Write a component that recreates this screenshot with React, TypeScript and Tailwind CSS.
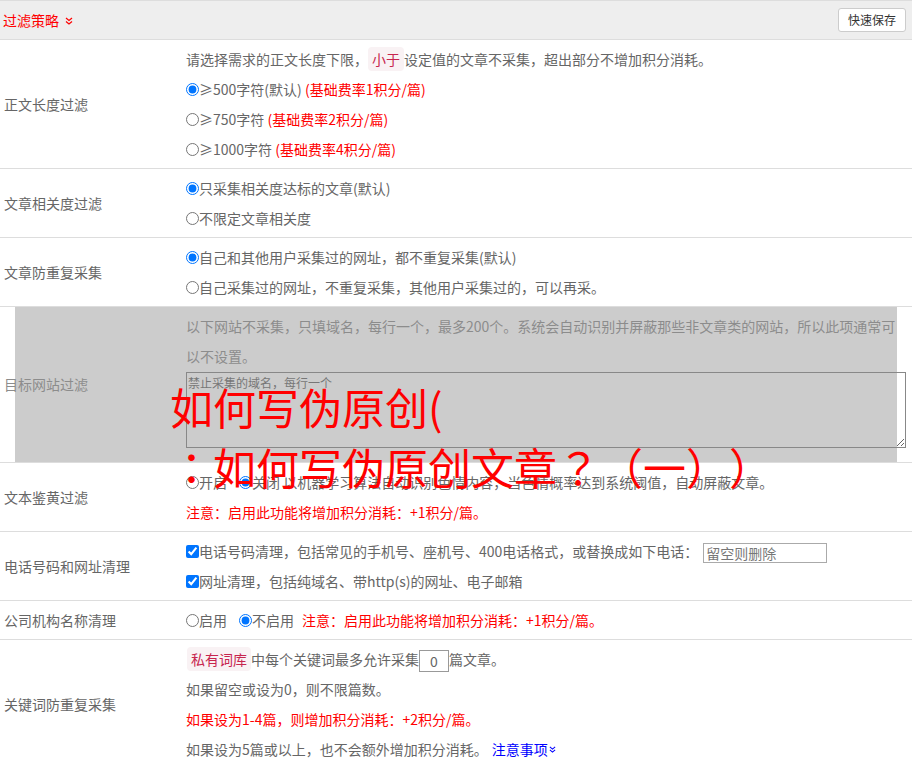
import type { ReactNode } from "react";

const font = { fontFamily: '"Noto Sans CJK SC", "Noto Sans", sans-serif' };
const tcFont = { fontFamily: '"Noto Sans CJK TC", sans-serif' };

function DoubleDown({ className }: { className?: string }) {
  return (
    <svg viewBox="0 0 8 8" className={className} fill="none" stroke="currentColor" strokeWidth="1.2">
      <path d="M1 1l3 2.5L7 1" />
      <path d="M1 4.5l3 2.5 3-2.5" />
    </svg>
  );
}

function Row({ label, children }: { label: string; children: ReactNode }) {
  return (
    <div className="flex border-b border-[#dddddd]">
      <div className="flex w-[186px] shrink-0 items-center pl-[4px]">{label}</div>
      <div className="flex-1 py-[4px] leading-[30px]">{children}</div>
    </div>
  );
}

function Radio({ name, checked }: { name: string; checked?: boolean }) {
  return (
    <input
      type="radio"
      name={name}
      defaultChecked={checked}
      className="m-0 h-[13px] w-[13px] align-[-1px]"
    />
  );
}

function Check() {
  return (
    <input type="checkbox" defaultChecked className="m-0 h-[13px] w-[13px] align-[-1px]" />
  );
}

function Tag({ children }: { children: ReactNode }) {
  return (
    <span className="rounded-[4px] bg-[#f9f2f4] px-[4px] py-[2px] text-[#c7254e]">{children}</span>
  );
}

export default function App() {
  return (
    <div
      className="relative w-[912px] bg-white text-[14px] text-[#666666] [text-spacing-trim:space-all]"
      style={font}
    >
      <div className="flex h-[40px] items-center justify-between border-y border-[#dddddd] bg-[#eeeeee] pl-[3px] pr-[6px]">
        <div className="flex items-center text-[#ff0000]">
          过滤策略
          <DoubleDown className="ml-[6px] mt-[1px] h-[8px] w-[8px]" />
        </div>
        <button className="h-[24px] rounded-[3px] border border-[#cccccc] bg-white px-[9px] text-[12px] text-[#333333]">
          快速保存
        </button>
      </div>

      <Row label="正文长度过滤">
        <div>
          请选择需求的正文长度下限，<Tag>小于</Tag>设定值的文章不采集，超出部分不增加积分消耗。
        </div>
        <div>
          <Radio name="len" checked />≥500字符(默认) <span className="text-[#ff0000]">(基础费率1积分/篇)</span>
        </div>
        <div>
          <Radio name="len" />≥750字符 <span className="text-[#ff0000]">(基础费率2积分/篇)</span>
        </div>
        <div>
          <Radio name="len" />≥1000字符 <span className="text-[#ff0000]">(基础费率4积分/篇)</span>
        </div>
      </Row>

      <Row label="文章相关度过滤">
        <div>
          <Radio name="rel" checked />只采集相关度达标的文章(默认)
        </div>
        <div>
          <Radio name="rel" />不限定文章相关度
        </div>
      </Row>

      <Row label="文章防重复采集">
        <div>
          <Radio name="dup" checked />自己和其他用户采集过的网址，都不重复采集(默认)
        </div>
        <div>
          <Radio name="dup" />自己采集过的网址，不重复采集，其他用户采集过的，可以再采。
        </div>
      </Row>

      <div className="relative flex border-b border-[#dddddd] text-[#8c8c8c]">
        <div className="absolute bottom-0 left-[15px] right-[15px] top-0 bg-[#cccccc]" />
        <div className="relative flex w-[186px] shrink-0 items-center pl-[4px]">目标网站过滤</div>
        <div className="relative flex-1 pb-[14px] pr-[6px] pt-[4px] leading-[30px]">
          <div className="whitespace-nowrap">
            以下网站不采集，只填域名，每行一个，最多200个。系统会自动识别并屏蔽那些非文章类的网站，所以此项通常可
          </div>
          <div>以不设置。</div>
          <textarea
            placeholder="禁止采集的域名，每行一个"
            className="mt-[1px] block h-[76px] w-full border border-[#888888] bg-transparent px-[1px] py-[1px] text-[12px] leading-[18px] placeholder:text-[#777777]"
          />
        </div>
      </div>

      <Row label="文本鉴黄过滤">
        <div>
          <Radio name="porn" />开启<span className="inline-block w-[12px]" />
          <Radio name="porn" checked />关闭 以机器学习算法自动识别色情内容，当色情概率达到系统阈值，自动屏蔽文章。
        </div>
        <div className="text-[#ff0000]">注意：启用此功能将增加积分消耗：+1积分/篇。</div>
      </Row>

      <Row label="电话号码和网址清理">
        <div>
          <Check />电话号码清理，包括常见的手机号、座机号、400电话格式，或替换成如下电话：
          <input
            placeholder="留空则删除"
            className="ml-[5px] h-[20px] w-[124px] border border-[#aaaaaa] px-[2px] align-middle text-[14px] placeholder:text-[#777777]"
          />
        </div>
        <div>
          <Check />网址清理，包括纯域名、带http(s)的网址、电子邮箱
        </div>
      </Row>

      <Row label="公司机构名称清理">
        <div>
          <Radio name="org" />启用<span className="inline-block w-[12px]" />
          <Radio name="org" checked />不启用
          <span className="ml-[8px] text-[#ff0000]">注意：启用此功能将增加积分消耗：+1积分/篇。</span>
        </div>
      </Row>

      <Row label="关键词防重复采集">
        <div>
          <span className="ml-[1px]" />
          <Tag>私有词库</Tag>中每个关键词最多允许采集
          <input
            defaultValue="0"
            className="h-[22px] w-[30px] border border-[#999999] text-center align-middle text-[14px] text-[#666666]"
          />
          篇文章。
        </div>
        <div>如果留空或设为0，则不限篇数。</div>
        <div className="text-[#ff0000]">如果设为1-4篇，则增加积分消耗：+2积分/篇。</div>
        <div>
          如果设为5篇或以上，也不会额外增加积分消耗。
          <span className="ml-[4px] inline-flex items-center text-[#0000ff]">
            注意事项
            <DoubleDown className="ml-[1px] h-[7px] w-[7px]" />
          </span>
        </div>
      </Row>

      <div className="pointer-events-none absolute left-[170px] top-[376px] whitespace-nowrap text-[43px] leading-[60px] text-[#ff0000]">
        如何写伪原创(
        <br />
        <span style={tcFont}>：</span>如何写伪原创文章<span style={tcFont}>？</span>（一））
      </div>
    </div>
  );
}
